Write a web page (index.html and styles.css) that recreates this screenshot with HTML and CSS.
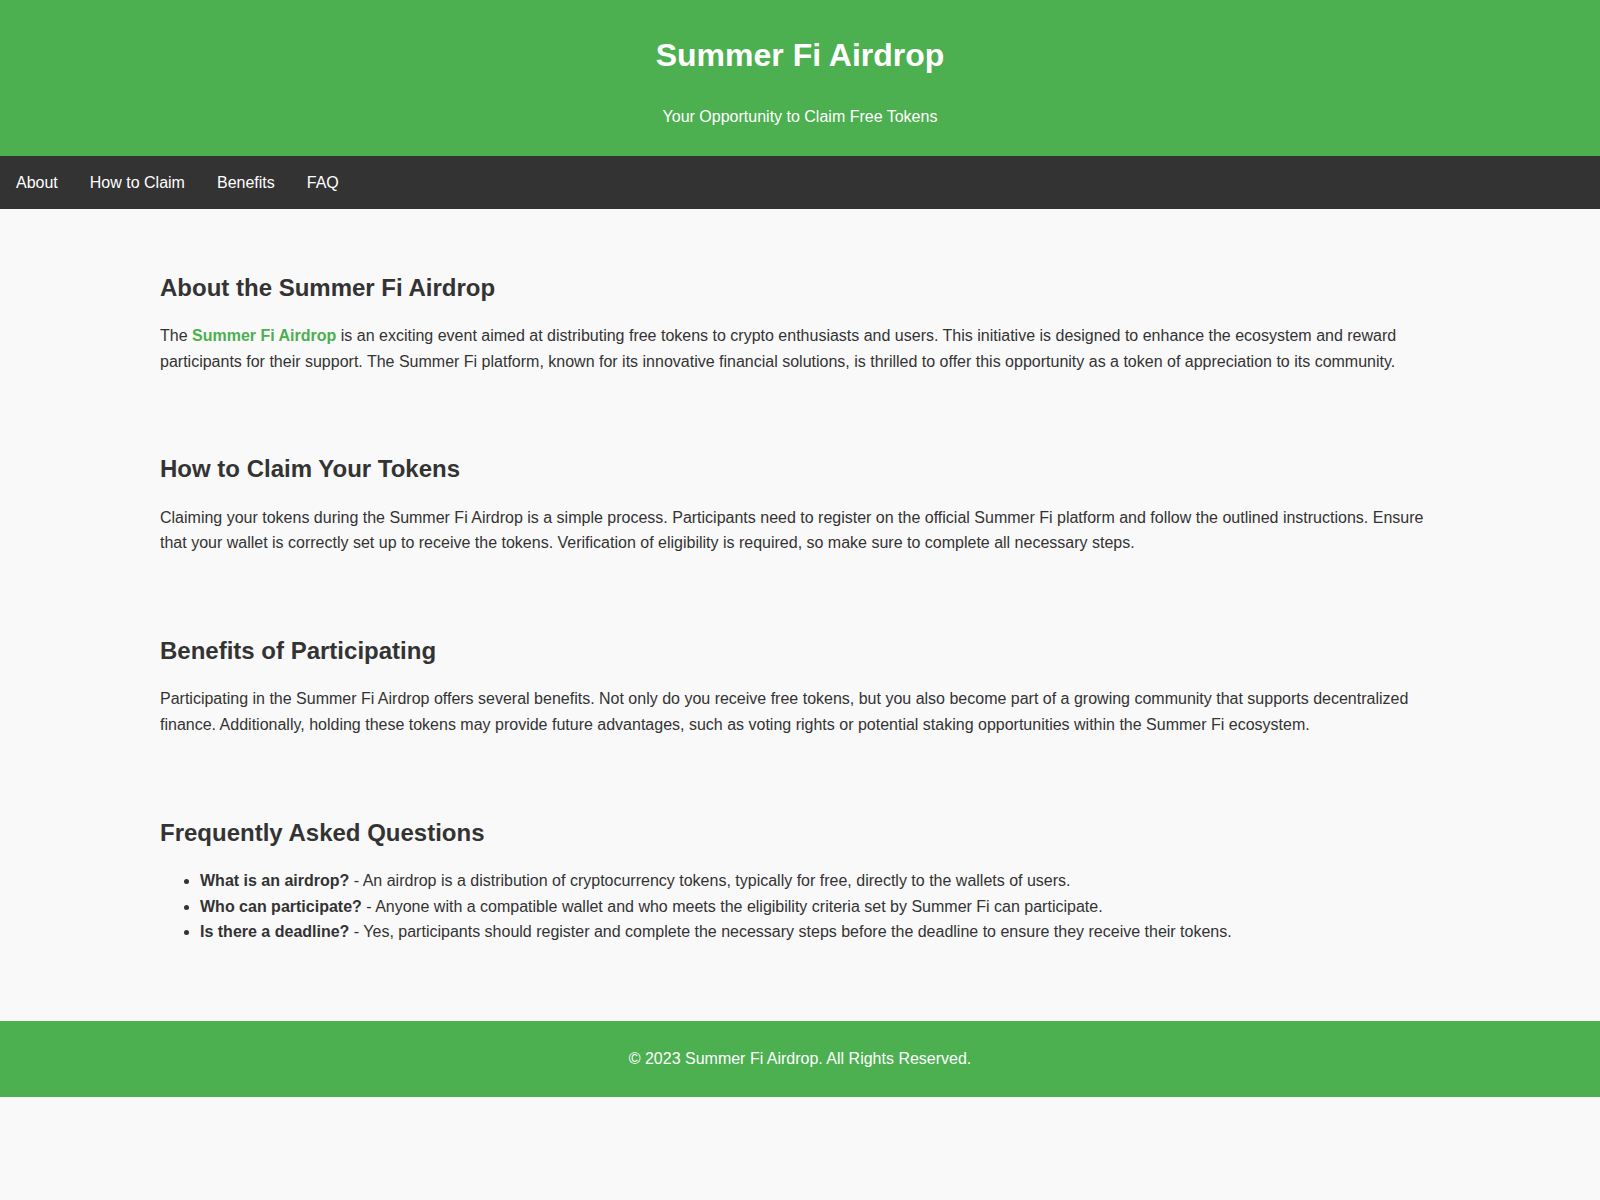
FILE: index.html
```html
<!DOCTYPE html>
<html lang="en">
  <head>
    <meta charset="UTF-8" />
    <meta name="viewport" content="width=device-width, initial-scale=1.0" />
    <title>Summer Fi Airdrop</title>
    <link rel="stylesheet" href="styles.css">
  </head>
  <body>
    <header class="site-header">
      <h1>Summer Fi Airdrop</h1>
      <p>Your Opportunity to Claim Free Tokens</p>
    </header>

    <nav class="site-nav">
      <a href="#about">About</a>
      <a href="#claim">How to Claim</a>
      <a href="#benefits">Benefits</a>
      <a href="#faq">FAQ</a>
    </nav>

    <main class="content">
      <section id="about" class="section">
        <h2>About the Summer Fi Airdrop</h2>
        <p>
          The <a href="#" class="highlight">Summer Fi Airdrop</a> is an exciting event aimed at distributing free tokens to crypto enthusiasts and users. This initiative is designed to enhance the ecosystem and reward participants for their support. The Summer Fi platform, known for its innovative financial solutions, is thrilled to offer this opportunity as a token of appreciation to its community.
        </p>
      </section>

      <section id="claim" class="section">
        <h2>How to Claim Your Tokens</h2>
        <p>
          Claiming your tokens during the Summer Fi Airdrop is a simple process. Participants need to register on the official Summer Fi platform and follow the outlined instructions. Ensure that your wallet is correctly set up to receive the tokens. Verification of eligibility is required, so make sure to complete all necessary steps.
        </p>
      </section>

      <section id="benefits" class="section">
        <h2>Benefits of Participating</h2>
        <p>
          Participating in the Summer Fi Airdrop offers several benefits. Not only do you receive free tokens, but you also become part of a growing community that supports decentralized finance. Additionally, holding these tokens may provide future advantages, such as voting rights or potential staking opportunities within the Summer Fi ecosystem.
        </p>
      </section>

      <section id="faq" class="section">
        <h2>Frequently Asked Questions</h2>
        <ul class="faq-list">
          <li><strong>What is an airdrop?</strong> - An airdrop is a distribution of cryptocurrency tokens, typically for free, directly to the wallets of users.</li>
          <li><strong>Who can participate?</strong> - Anyone with a compatible wallet and who meets the eligibility criteria set by Summer Fi can participate.</li>
          <li><strong>Is there a deadline?</strong> - Yes, participants should register and complete the necessary steps before the deadline to ensure they receive their tokens.</li>
        </ul>
      </section>
    </main>

    <footer class="site-footer">
      <p>&copy; 2023 Summer Fi Airdrop. All Rights Reserved.</p>
    </footer>
  </body>
</html>
```

FILE: styles.css
```css
/* base */
body {
  margin: 0;
  font-family: "Liberation Sans", Arial, sans-serif;
  font-size: 16px;
  line-height: 1.6;
  background-color: #f9f9f9;
  color: #333;
}

/* header */
.site-header {
  background-color: #4caf50;
  color: #fff;
  text-align: center;
  padding: 30px 20px 26.3px;
}

.site-header h1 {
  margin: 0;
  font-size: 32px;
}

.site-header p {
  margin: 23px 0 0;
}

/* navigation */
.site-nav {
  display: flex;
  background-color: #333;
}

.site-nav a {
  display: block;
  padding: 13.6px 16px;
  color: #fff;
  text-decoration: none;
}

.site-nav a:hover {
  background-color: #444;
}

/* content */
.content {
  max-width: 1280px;
  margin: 0 auto;
  padding: 20px 0;
}

.section {
  padding: 20px 0;
}

.section h2 {
  font-size: 24px;
  margin: 20px 0 16px;
  color: #333;
}

.section p {
  margin: 16px 0;
}

.highlight {
  color: #4caf50;
  font-weight: bold;
  text-decoration: none;
}

.faq-list {
  margin: 16px 0;
  padding-left: 40px;
}

/* footer */
.site-footer {
  margin-top: 20px;
  background-color: #4caf50;
  color: #fff;
  text-align: center;
  padding: 25.5px 20px;
}

.site-footer p {
  margin: 0;
}
```
